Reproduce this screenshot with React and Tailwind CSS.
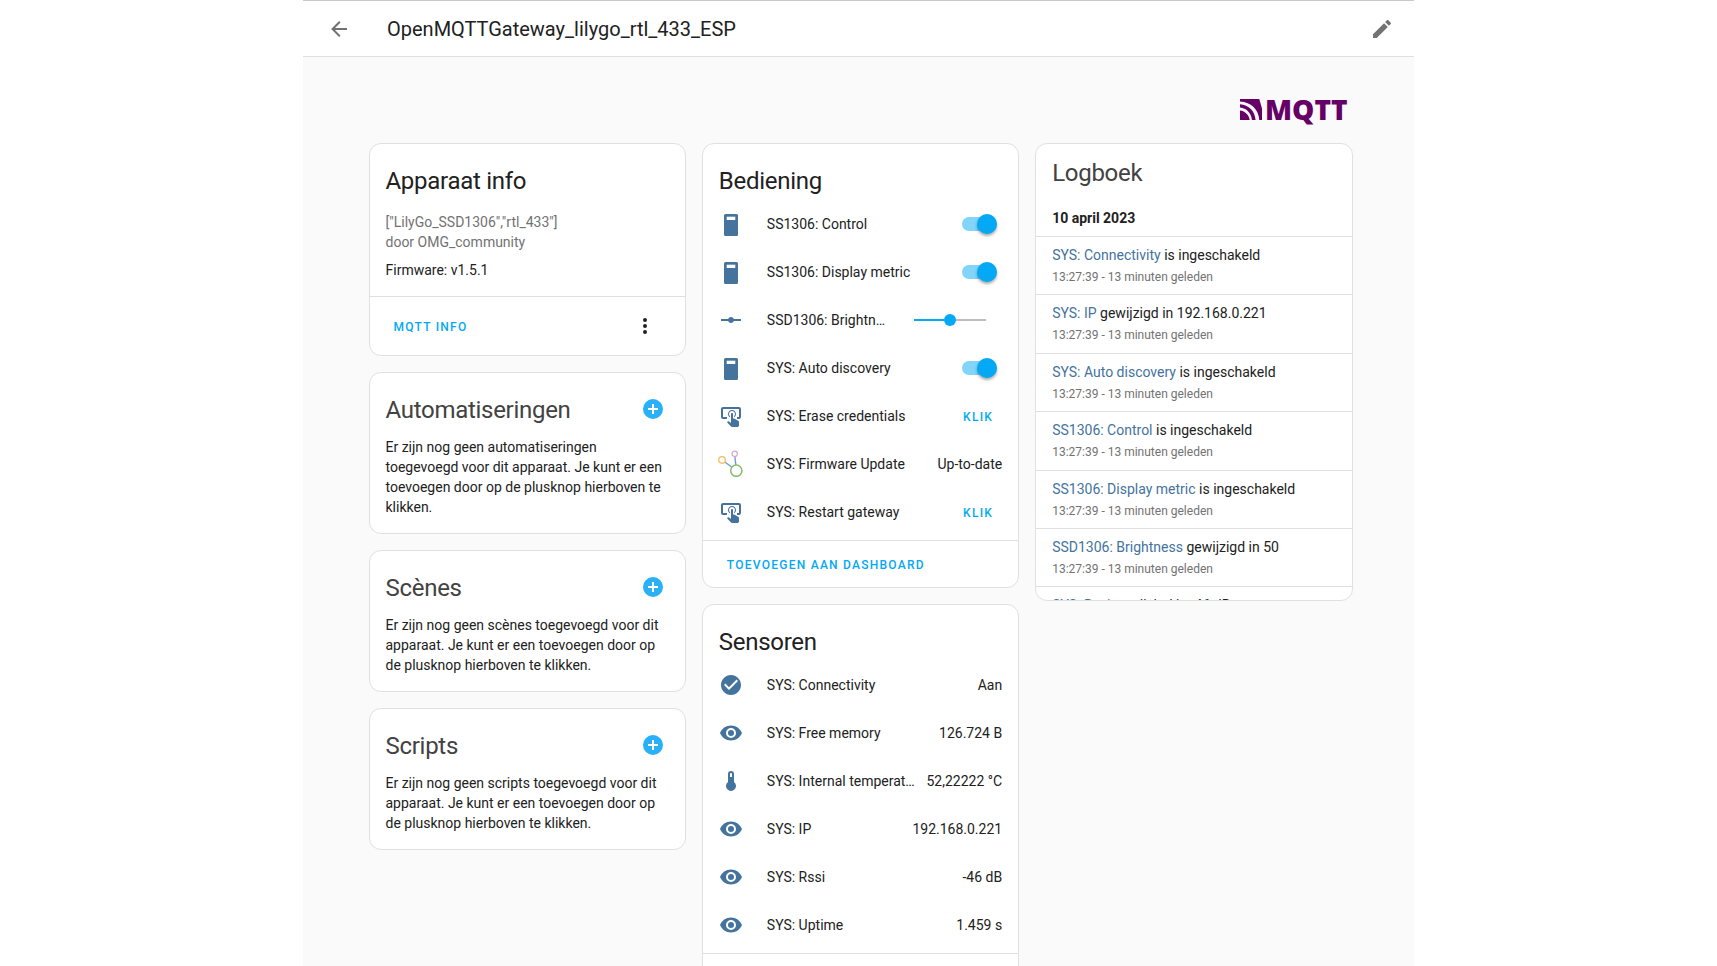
import React from "react";

const mdi = {
  back: "M20,11V13H8L13.5,18.5L12.08,19.92L4.16,12L12.08,4.08L13.5,5.5L8,11H20Z",
  pencil:
    "M20.71,7.04C21.1,6.65 21.1,6 20.71,5.63L18.37,3.29C18,2.9 17.35,2.9 16.96,3.29L15.12,5.12L18.87,8.87M3,17.25V21H6.75L17.81,9.93L14.06,6.18L3,17.25Z",
  dots:
    "M12,16A2,2 0 0,1 14,18A2,2 0 0,1 12,20A2,2 0 0,1 10,18A2,2 0 0,1 12,16M12,10A2,2 0 0,1 14,12A2,2 0 0,1 12,14A2,2 0 0,1 10,12A2,2 0 0,1 12,10M12,4A2,2 0 0,1 14,6A2,2 0 0,1 12,8A2,2 0 0,1 10,6A2,2 0 0,1 12,4Z",
  plus:
    "M17,13H13V17H11V13H7V11H11V7H13V11H17M12,2A10,10 0 0,0 2,12A10,10 0 0,0 12,22A10,10 0 0,0 22,12A10,10 0 0,0 12,2Z",
  eye:
    "M12,9A3,3 0 0,0 9,12A3,3 0 0,0 12,15A3,3 0 0,0 15,12A3,3 0 0,0 12,9M12,17A5,5 0 0,1 7,12A5,5 0 0,1 12,7A5,5 0 0,1 17,12A5,5 0 0,1 12,17M12,4.5C7,4.5 2.73,7.61 1,12C2.73,16.39 7,19.5 12,19.5C17,19.5 21.27,16.39 23,12C21.27,7.61 17,4.5 12,4.5Z",
  check:
    "M12 2C6.5 2 2 6.5 2 12S6.5 22 12 22 22 17.5 22 12 17.5 2 12 2M10 17L5 12L6.41 10.59L10 14.17L17.59 6.58L19 8L10 17Z",
  thermometer:
    "M15 13V5A3 3 0 0 0 9 5V13A5 5 0 1 0 15 13M12 4A1 1 0 0 1 13 5V8H11V5A1 1 0 0 1 12 4Z",
  tap:
    "M13 5C15.21 5 17 6.79 17 9C17 10.5 16.2 11.77 15 12.46V11.24C15.61 10.69 16 9.89 16 9C16 7.34 14.66 6 13 6S10 7.34 10 9C10 9.89 10.39 10.69 11 11.24V12.46C9.8 11.77 9 10.5 9 9C9 6.79 10.79 5 13 5M20 20.5C19.97 21.32 19.32 21.97 18.5 22H13C12.62 22 12.26 21.85 12 21.57L8 17.37L8.74 16.6C8.93 16.39 9.2 16.28 9.5 16.28H9.7L12 18V9C12 8.45 12.45 8 13 8S14 8.45 14 9V13.47L15.21 13.6L19.15 15.79C19.68 16.03 20 16.56 20 17.14V20.5M20 2H4C2.9 2 2 2.9 2 4V12C2 13.11 2.9 14 4 14H8V12L4 12L4 4H20L20 12H18V14H20V13.96L20.04 14C21.13 14 22 13.09 22 12V4C22 2.9 21.11 2 20 2Z",
  slider:
    "M2 11H9.17C9.58 9.83 10.69 9 12 9S14.42 9.83 14.83 11H22V13H14.83C14.42 14.17 13.31 15 12 15S9.58 14.17 9.17 13H2V11Z",
};

const Icon = ({ d, className = "" }) => (
  <svg viewBox="0 0 24 24" className={`w-6 h-6 shrink-0 fill-current ${className}`}>
    <path d={d} />
  </svg>
);

const SwitchIcon = () => (
  <svg viewBox="0 0 24 24" className="w-6 h-6 shrink-0">
    <rect x="5" y="2" width="14" height="22" rx="1.5" fill="#44739e" />
    <rect x="7.7" y="4.7" width="8.6" height="3.3" fill="#fff" />
  </svg>
);

const UpdateIcon = () => (
  <svg viewBox="0 0 24 24" className="w-6 h-6 shrink-0 overflow-visible" fill="none">
    <path d="M5.8 10L12.6 15M15.9 4.6L16.8 12.8" stroke="#6f9fd0" strokeWidth="1.4" />
    <circle cx="3" cy="8" r="3.3" stroke="#f8bb5d" strokeWidth="1.3" />
    <circle cx="15.7" cy="1.8" r="2.7" stroke="#d7a6cc" strokeWidth="1.2" />
    <circle cx="17.3" cy="18.7" r="5.6" stroke="#82bd69" strokeWidth="1.5" />
  </svg>
);

const Toggle = () => (
  <div className="relative w-[33px] h-[14px] mr-[7px] rounded-full bg-[#81d4fa]">
    <div className="absolute right-[-2px] top-[-3px] w-5 h-5 rounded-full bg-[#03a9f4] shadow-[0_2px_3px_rgba(0,0,0,0.35)]" />
  </div>
);

const Slider = () => (
  <div className="flex items-center w-[72px] mr-4 ml-[27px] shrink-0">
    <div className="w-[30px] h-[2px] bg-[#03a9f4]" />
    <div className="w-3 h-3 rounded-full bg-[#03a9f4]" />
    <div className="flex-1 h-[2px] bg-[#bdbdbd]" />
  </div>
);

const KlikButton = () => (
  <span className="pt-[3px] text-[12px] font-medium tracking-[1.25px] text-[#03a9f4] mr-[9px]">KLIK</span>
);

const Row = ({ icon, name, children }) => (
  <div className="flex items-center h-12 pl-4 pr-4">
    {icon}
    <span className="ml-6 flex-1 min-w-0 truncate text-[#212121]">{name}</span>
    {children}
  </div>
);

const Value = ({ children }) => <span className="ml-2 shrink-0 text-[#212121]">{children}</span>;

const Card = ({ children }) => (
  <div className="bg-white border border-[#e0e0e0] rounded-xl overflow-hidden">{children}</div>
);

const CardTitle = ({ children, className = "text-[#212121]" }) => (
  <h2 className={`text-2xl leading-8 font-normal tracking-[-0.012em] ${className}`}>{children}</h2>
);

const EmptyCard = ({ title, text }) => (
  <Card>
    <div className="px-4 pt-[21px] pb-4">
      <div className="flex items-center justify-between">
        <CardTitle className="text-[#424242]">{title}</CardTitle>
        <Icon d={mdi.plus} className="text-[#29b0f6] mr-1 -translate-y-px" />
      </div>
      <p className="mt-[11px] text-[#212121]">{text}</p>
    </div>
  </Card>
);

const logEntries = [
  ["SYS: Connectivity", "is ingeschakeld"],
  ["SYS: IP", "gewijzigd in 192.168.0.221"],
  ["SYS: Auto discovery", "is ingeschakeld"],
  ["SS1306: Control", "is ingeschakeld"],
  ["SS1306: Display metric", "is ingeschakeld"],
  ["SSD1306: Brightness", "gewijzigd in 50"],
  ["SYS: Rssi", "gewijzigd in -46 dB"],
];

const sensors = [
  [mdi.check, "SYS: Connectivity", "Aan"],
  [mdi.eye, "SYS: Free memory", "126.724 B"],
  [mdi.thermometer, "SYS: Internal temperature", "52,22222 °C"],
  [mdi.eye, "SYS: IP", "192.168.0.221"],
  [mdi.eye, "SYS: Rssi", "-46 dB"],
  [mdi.eye, "SYS: Uptime", "1.459 s"],
];

const MqttLogo = () => (
  <div className="flex items-start justify-end h-[26px] mr-[5px] text-[#660066]">
    <svg viewBox="0 0 24 22" className="w-[22px] h-[21px] mr-[3px] shrink-0" fill="#660066" preserveAspectRatio="none">
      <path d="M0 0H21L24 10V22H21C20.5 11 12 3 0 2.5Z" />
      <path d="M0 5.5C9.5 6 16.5 13 17 22H13C12.5 15 7 9.5 0 9Z" />
      <path d="M0 12C5.5 12.5 10 17 10.5 22H0Z" />
    </svg>
    <span className="font-['Open_Sans'] font-extrabold text-[28px] leading-5">MQTT</span>
  </div>
);

export default function App() {
  return (
    <div className="h-screen overflow-hidden bg-white font-['Roboto',sans-serif] text-sm">
      <div className="ml-[303px] w-[1111px] h-full bg-[#fafafa] border-t border-[#c8c8c8]">
        <header className="flex items-center h-14 bg-white border-b border-[#e0e0e0] pl-6 pr-5">
          <Icon d={mdi.back} className="text-[#727272]" />
          <h1 className="ml-9 flex-1 text-xl font-normal text-[#212121]">OpenMQTTGateway_lilygo_rtl_433_ESP</h1>
          <Icon d={mdi.pencil} className="text-[#727272]" />
        </header>

        <main className="pl-[65.5px] pr-[61.5px] pt-[42px]">
          <MqttLogo />
          <div className="grid grid-cols-3 gap-4 items-start mt-[18px]">
            <div className="flex flex-col gap-4">
              <Card>
                <div className="px-4 pt-[21px] pb-4 border-b border-[#e0e0e0]">
                  <CardTitle>Apparaat info</CardTitle>
                  <div className="mt-[15px] text-[#727272]">["LilyGo_SSD1306","rtl_433"]</div>
                  <div className="text-[#727272]">door OMG_community</div>
                  <div className="mt-2 text-[#212121]">Firmware: v1.5.1</div>
                </div>
                <div className="flex items-center justify-between h-[58px] pl-6 pr-7">
                  <span className="pt-[3px] text-[12px] font-medium tracking-[1.25px] text-[#03a9f4]">MQTT INFO</span>
                  <Icon d={mdi.dots} className="text-[#212121]" />
                </div>
              </Card>
              <EmptyCard
                title="Automatiseringen"
                text="Er zijn nog geen automatiseringen toegevoegd voor dit apparaat. Je kunt er een toevoegen door op de plusknop hierboven te klikken."
              />
              <EmptyCard
                title="Scènes"
                text="Er zijn nog geen scènes toegevoegd voor dit apparaat. Je kunt er een toevoegen door op de plusknop hierboven te klikken."
              />
              <EmptyCard
                title="Scripts"
                text="Er zijn nog geen scripts toegevoegd voor dit apparaat. Je kunt er een toevoegen door op de plusknop hierboven te klikken."
              />
            </div>

            <div className="flex flex-col gap-4">
              <Card>
                <div className="pt-[21px] pb-1 border-b border-[#e0e0e0]">
                  <div className="px-4 mb-[3px]">
                    <CardTitle>Bediening</CardTitle>
                  </div>
                  <Row icon={<SwitchIcon />} name="SS1306: Control"><Toggle /></Row>
                  <Row icon={<SwitchIcon />} name="SS1306: Display metric"><Toggle /></Row>
                  <Row icon={<Icon d={mdi.slider} className="text-[#44739e]" />} name="SSD1306: Brightness"><Slider /></Row>
                  <Row icon={<SwitchIcon />} name="SYS: Auto discovery"><Toggle /></Row>
                  <Row icon={<Icon d={mdi.tap} className="text-[#44739e] translate-y-px" />} name="SYS: Erase credentials"><KlikButton /></Row>
                  <Row icon={<UpdateIcon />} name="SYS: Firmware Update"><Value>Up-to-date</Value></Row>
                  <Row icon={<Icon d={mdi.tap} className="text-[#44739e] translate-y-px" />} name="SYS: Restart gateway"><KlikButton /></Row>
                </div>
                <div className="flex items-center h-[46px] pl-6 pt-1">
                  <span className="text-[12px] font-medium tracking-[1.25px] text-[#03a9f4]">TOEVOEGEN AAN DASHBOARD</span>
                </div>
              </Card>
              <Card>
                <div className="pt-[21px] pb-1 border-b border-[#e0e0e0]">
                  <div className="px-4 mb-[3px]">
                    <CardTitle>Sensoren</CardTitle>
                  </div>
                  {sensors.map(([d, name, value]) => (
                    <Row key={name} icon={<Icon d={d} className="text-[#44739e]" />} name={name}>
                      <Value>{value}</Value>
                    </Row>
                  ))}
                </div>
                <div className="h-[46px]" />
              </Card>
            </div>

            <Card>
              <div className="h-[456px] overflow-hidden">
                <div className="px-4 pt-[13px]">
                  <CardTitle className="text-[#424242]">Logboek</CardTitle>
                </div>
                <div className="px-4 pt-[19px] pb-2 font-bold text-[#212121] border-b border-[#e0e0e0]">10 april 2023</div>
                {logEntries.map(([link, rest]) => (
                  <div key={link} className="h-[58.4px] px-4 pt-2 border-b border-[#e0e0e0]">
                    <div className="text-[#212121]">
                      <span className="text-[#44739e]">{link}</span> {rest}
                    </div>
                    <div className="mt-[2px] text-[12px] leading-5 text-[#727272]">13:27:39 - 13 minuten geleden</div>
                  </div>
                ))}
              </div>
            </Card>
          </div>
        </main>
      </div>
    </div>
  );
}
